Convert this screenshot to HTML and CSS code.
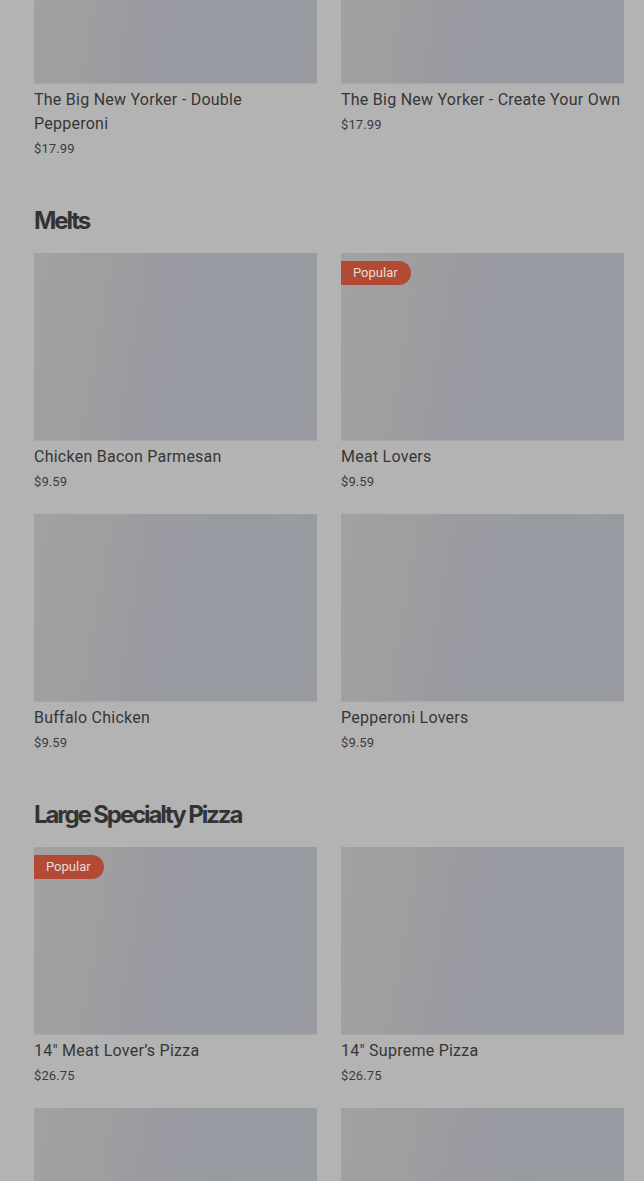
FILE: index.html
```html
<!DOCTYPE html>
<html lang="en">
<head>
<meta charset="utf-8">
<title>Menu</title>
<link rel="stylesheet" href="styles.css">
</head>
<body>
<main class="page">
  <section class="section section-scrolled">
    <div class="grid">
      <article class="card">
        <div class="thumb"></div>
        <h3 class="name">The Big New Yorker - Double Pepperoni</h3>
        <p class="price">$17.99</p>
      </article>
      <article class="card">
        <div class="thumb"></div>
        <h3 class="name">The Big New Yorker - Create Your Own</h3>
        <p class="price">$17.99</p>
      </article>
    </div>
  </section>

  <section class="section">
    <h2 class="heading">Melts</h2>
    <div class="grid">
      <article class="card">
        <div class="thumb"></div>
        <h3 class="name">Chicken Bacon Parmesan</h3>
        <p class="price">$9.59</p>
      </article>
      <article class="card">
        <div class="thumb"><span class="badge">Popular</span></div>
        <h3 class="name">Meat Lovers</h3>
        <p class="price">$9.59</p>
      </article>
      <article class="card">
        <div class="thumb"></div>
        <h3 class="name">Buffalo Chicken</h3>
        <p class="price">$9.59</p>
      </article>
      <article class="card">
        <div class="thumb"></div>
        <h3 class="name">Pepperoni Lovers</h3>
        <p class="price">$9.59</p>
      </article>
    </div>
  </section>

  <section class="section">
    <h2 class="heading">Large Specialty Pizza</h2>
    <div class="grid">
      <article class="card">
        <div class="thumb"><span class="badge">Popular</span></div>
        <h3 class="name">14" Meat Lover’s Pizza</h3>
        <p class="price">$26.75</p>
      </article>
      <article class="card">
        <div class="thumb"></div>
        <h3 class="name">14" Supreme Pizza</h3>
        <p class="price">$26.75</p>
      </article>
      <article class="card">
        <div class="thumb"></div>
      </article>
      <article class="card">
        <div class="thumb"></div>
      </article>
    </div>
  </section>
</main>
</body>
</html>
```

FILE: styles.css
```css
* { box-sizing: border-box; }
html, body {
  margin: 0;
  padding: 0;
  background: #b3b3b3;
  overflow: hidden;
}
body {
  font-family: "Roboto", "Liberation Sans", sans-serif;
  color: #363636;
}
.page {
  padding: 0 20px 0 34px;
  display: flex;
  flex-direction: column;
  gap: 46px;
}
.section-scrolled {
  margin-top: -104px;
}
.heading {
  margin: 0 0 16px;
  font-family: "Inter", "Roboto", sans-serif;
  font-size: 24px;
  line-height: 32px;
  font-weight: 700;
  letter-spacing: -2.1px;
  color: #333;
}
.grid {
  display: grid;
  grid-template-columns: 1fr 1fr;
  column-gap: 24px;
  row-gap: 22px;
}
.card {
  display: flex;
  flex-direction: column;
}
.thumb {
  position: relative;
  height: 188px;
  background: linear-gradient(100deg, #a1a1a1 0%, #9f9fa0 22%, #9a9ba1 40%, #989aa2 60%, #999aa1 100%);
  border-bottom: 1px solid #a6a6a6;
}
.badge {
  position: absolute;
  left: 0;
  top: 8px;
  height: 24px;
  padding: 0 13px 0 12px;
  background: #b34a35;
  color: #e9dcd8;
  font-size: 13px;
  line-height: 24px;
  border-radius: 0 12px 12px 0;
}
.name {
  margin: 4px 0 0;
  font-size: 16px;
  line-height: 24px;
  font-weight: 400;
  color: #363636;
  letter-spacing: 0.25px;
}
.price {
  margin: 3px 0 0;
  font-size: 13px;
  line-height: 20px;
  color: #3c3c3c;
  letter-spacing: 0.1px;
}
```
